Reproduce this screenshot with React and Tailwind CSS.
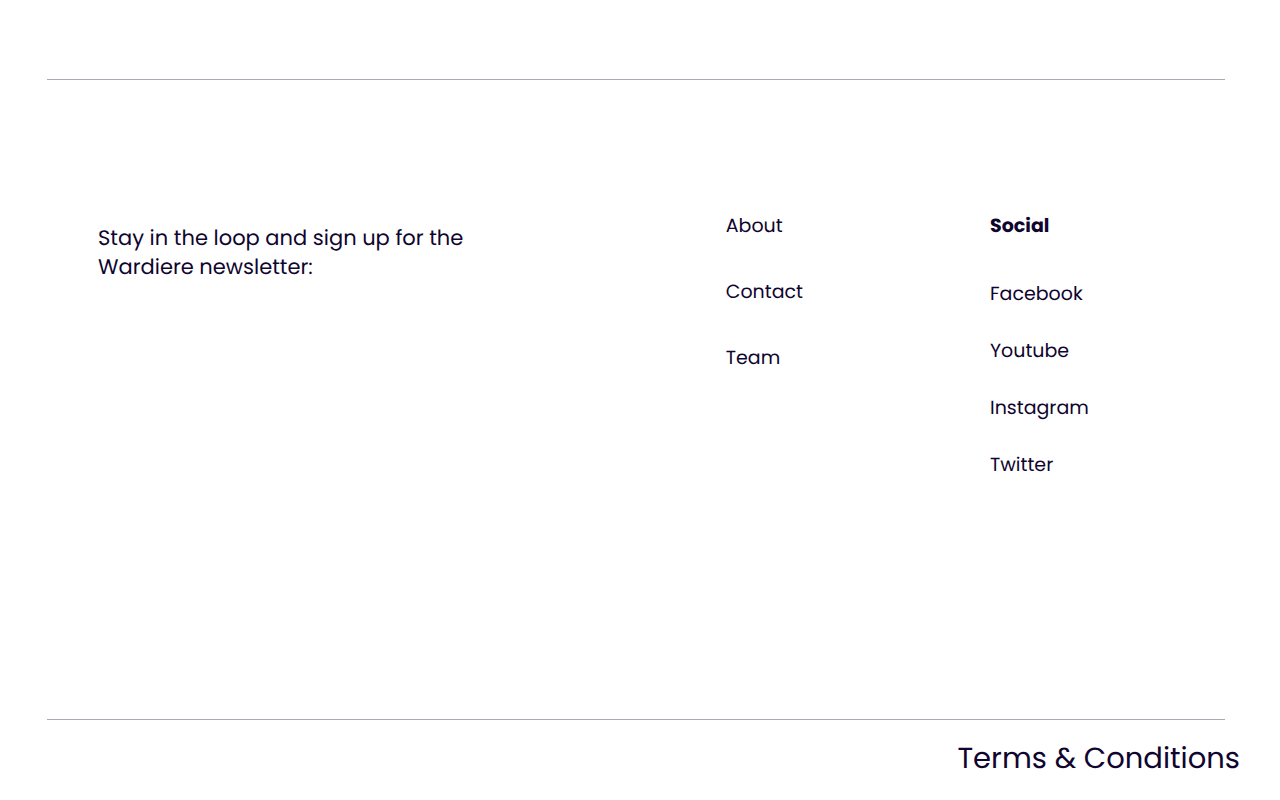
const pages = ["About", "Contact", "Team"];
const networks = ["Facebook", "Youtube", "Instagram", "Twitter"];

export default function App() {
  return (
    <footer className="min-h-screen bg-white pt-[79px] font-['Poppins','Inter',sans-serif] text-[#0f052e] antialiased [text-rendering:geometricPrecision]">
      <div className="mr-[55px] ml-[47px] flex min-h-[641px] items-start border-y border-[#aca8b4] pt-[132px] pl-[51px]">
        <p className="mt-3 w-[400px] text-[21px] leading-[29px]">
          Stay in the loop and sign up for the Wardiere newsletter:
        </p>
        <nav aria-label="Site" className="mr-[187px] ml-auto flex flex-col gap-[38px] text-[19px] leading-7">
          {pages.map((name) => (
            <a key={name} href="#">{name}</a>
          ))}
        </nav>
        <nav aria-label="Social" className="w-[235px] text-[19px] leading-7">
          <h2 className="mb-10 font-bold">Social</h2>
          <ul className="flex flex-col gap-[29px]">
            {networks.map((name) => (
              <li key={name}><a href="#">{name}</a></li>
            ))}
          </ul>
        </nav>
      </div>
      <div className="flex justify-end pt-[17px] pr-10">
        <a href="#" className="text-[29px] leading-[45px]">Terms &amp; Conditions</a>
      </div>
    </footer>
  );
}
